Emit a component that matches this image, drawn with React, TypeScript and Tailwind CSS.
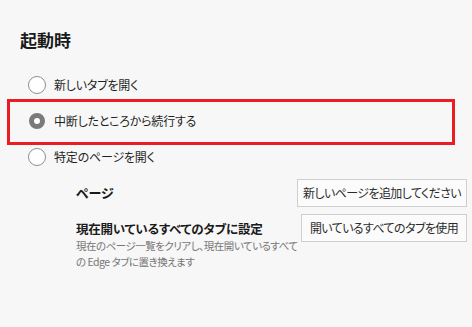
import React from 'react';

interface RadioRowProps {
  label: string;
  checked?: boolean;
  highlighted?: boolean;
}

const RadioRow: React.FC<RadioRowProps> = ({ label, checked, highlighted }) => (
  <div className="relative flex h-[36px] items-center gap-[8px] pl-[8px]">
    {checked ? (
      <span className="flex h-[18px] w-[18px] items-center justify-center">
        <span className="h-[16px] w-[16px] rounded-full border-[5px] border-[#7a7a7a] bg-white" />
      </span>
    ) : (
      <span className="h-[18px] w-[18px] rounded-full border border-[#8f8f8f] bg-white" />
    )}
    <span className="text-[12px] leading-[18px] tracking-[-0.2px] text-[#1f1f1f]">{label}</span>
    {highlighted && (
      <span className="pointer-events-none absolute -top-[4px] -bottom-[6px] -left-[13px] right-[12px] border-[3px] border-[#ec1c24]" />
    )}
  </div>
);

const OptionButton: React.FC<{ label: string; width: string }> = ({ label, width }) => (
  <button className={`h-[28px] ${width} shrink-0 whitespace-nowrap border border-[#cfcfcf] bg-[#fbfbfb] text-[12px] leading-[18px] tracking-[-0.6px] text-[#2b2b2b]`}>
    {label}
  </button>
);

const App: React.FC = () => {
  return (
    <div className="h-[327px] w-[472px] overflow-hidden bg-[#f7f7f7] pl-[20px] pr-[5px] pt-[28px] font-['Noto_Sans_CJK_JP',sans-serif] [font-feature-settings:'palt']">
      {/* Section title */}
      <h2 className="text-[17px] font-semibold leading-[24px] text-[#1a1a1a]">起動時</h2>

      {/* Startup options */}
      <div className="mt-[15px] flex flex-col">
        <RadioRow label="新しいタブを開く" />
        <RadioRow label="中断したところから続行する" checked highlighted />
        <RadioRow label="特定のページを開く" />
      </div>

      {/* Specific pages */}
      <div className="mt-[4px] flex flex-col gap-[7px] pl-[56px]">
        <div className="flex items-center justify-between">
          <span className="text-[13px] font-bold leading-[18px] text-[#1a1a1a]">ページ</span>
          <OptionButton label="新しいページを追加してください" width="w-[170px]" />
        </div>
        <div className="flex items-start justify-between">
          <div className="w-[222px] pt-[6px]">
            <p className="whitespace-nowrap text-[12.5px] font-bold leading-[18px] tracking-[-0.2px] text-[#1a1a1a]">現在開いているすべてのタブに設定</p>
            <p className="whitespace-nowrap text-[10.5px] leading-[16px] tracking-[-0.5px] text-[#767676]">
              現在のページ一覧をクリアし、現在開いているすべて
              <br />
              の Edge タブに置き換えます
            </p>
          </div>
          <OptionButton label="開いているすべてのタブを使用" width="w-[166px]" />
        </div>
      </div>
    </div>
  );
};

export default App;
